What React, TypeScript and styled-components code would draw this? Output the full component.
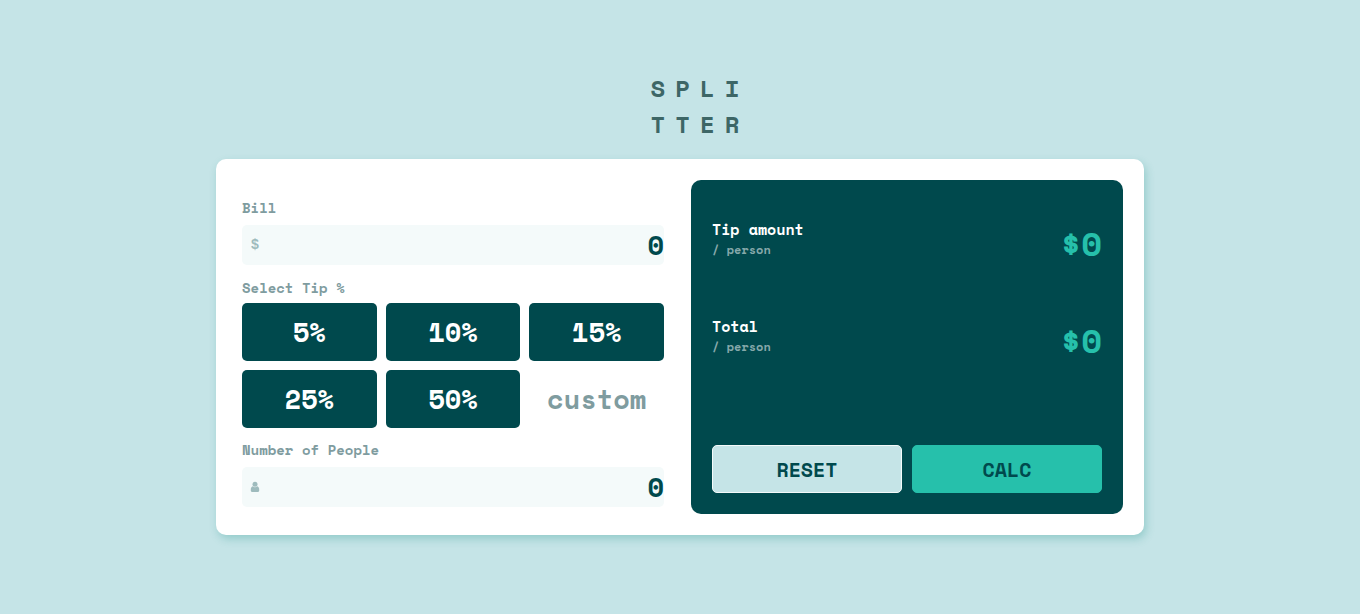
import React, { useState } from "react";
import styled, { createGlobalStyle } from "styled-components";

const GlobalStyle = createGlobalStyle`
  *, *::before, *::after { box-sizing: border-box; }
  body {
    margin: 0;
    background: #c5e4e7;
    color: #00494d;
    font-family: "Space Mono", "Liberation Mono", monospace;
    font-weight: 700;
  }
  button, input { font: inherit; color: inherit; }
`;

const Page = styled.main`
  min-height: 100vh;
  display: flex;
  flex-direction: column;
  align-items: center;
  justify-content: center;
  padding: 0 16px 9px;
`;

const Logo = styled.h1`
  margin: 0 0 17px;
  padding-left: 40px;
  font-size: 24px;
  line-height: 36px;
  letter-spacing: 10px;
  color: #3d6666;
`;

const Card = styled.section`
  width: 100%;
  max-width: 928px;
  display: grid;
  grid-template-columns: repeat(auto-fit, minmax(300px, 1fr));
  gap: 22px;
  padding: 21px;
  background: #fff;
  border-radius: 10px;
  box-shadow: 2px 4px 8px rgba(38, 150, 140, 0.3);
`;

const Form = styled.form`
  display: flex;
  flex-direction: column;
  gap: 12px;
  padding: 18px 5px 7px;
`;

const Field = styled.div`
  display: flex;
  flex-direction: column;
  gap: 7px;
`;

const Label = styled.label`
  font-size: 14px;
  line-height: 20px;
  color: #7f9c9f;
`;

const InputBox = styled.div`
  display: flex;
  align-items: center;
  height: 40px;
  padding-left: 8px;
  border-radius: 5px;
  background: #f4fafa;
`;

const FieldIcon = styled.span`
  display: flex;
  flex: none;
  width: 10px;
  justify-content: center;
  font-family: "Liberation Mono", monospace;
  font-size: 14px;
  font-weight: 700;
  color: #9ebbbd;
`;

const AmountInput = styled.input`
  flex: 1;
  min-width: 0;
  height: 40px;
  padding: 0;
  border: 0;
  outline: 0;
  background: transparent;
  font-size: 27px;
  text-align: right;
`;

const TipGroup = styled.fieldset`
  min-width: 0;
  margin: 0;
  padding: 0;
  border: 0;
`;

const TipLegend = styled.legend`
  padding: 0 0 4px;
  font-size: 14px;
  line-height: 22px;
  color: #7f9c9f;
`;

const TipGrid = styled.div`
  display: grid;
  grid-template-columns: repeat(3, minmax(0, 1fr));
  gap: 9px;
`;

const TipButton = styled.button`
  height: 58px;
  padding: 0;
  border: 0;
  border-radius: 5px;
  background: #00494d;
  color: #fff;
  font-size: 27px;
  cursor: pointer;
`;

const CustomTip = styled.input`
  width: 100%;
  height: 58px;
  padding: 0;
  border: 0;
  outline: 0;
  background: transparent;
  font-size: 27px;
  text-align: center;
  &::placeholder { color: #7f9c9f; opacity: 1; }
`;

const Summary = styled.section`
  display: flex;
  flex-direction: column;
  gap: 55px;
  padding: 39px 21px 21px;
  border-radius: 10px;
  background: #00494d;
`;

const ResultRow = styled.div`
  display: flex;
  align-items: flex-end;
  justify-content: space-between;
`;

const ResultName = styled.p`
  margin: 0;
  font-size: 15px;
  line-height: 20px;
  color: #fff;
`;

const PerPerson = styled.small`
  display: block;
  font-size: 12px;
  line-height: 22px;
  color: #86a8aa;
`;

const Result = styled.output`
  font-size: 34px;
  line-height: 36px;
  color: #26c0ab;
`;

const Actions = styled.div`
  display: grid;
  grid-template-columns: 1fr 1fr;
  gap: 10px;
  margin-top: auto;
`;

const ActionButton = styled.button<{ $primary?: boolean }>`
  height: 48px;
  padding: 0;
  border: 1px solid ${(p) => (p.$primary ? "#26c0ab" : "#f4fafa")};
  border-radius: 5px;
  background: ${(p) => (p.$primary ? "#26c0ab" : "#c5e4e7")};
  font-size: 20px;
  cursor: pointer;
`;

const PersonIcon = () => (
  <svg width="10" height="12" viewBox="0 0 10 12" fill="currentColor" aria-hidden="true">
    <circle cx="5" cy="3.3" r="2.5" />
    <path d="M2.8 5.3C4 6.6 6 6.6 7.2 5.3C8.6 5.8 9.2 7 9.2 8.4V9.6C9.2 10.5 8.8 11 8 11H2C1.2 11 0.8 10.5 0.8 9.6V8.4C0.8 7 1.4 5.8 2.8 5.3Z" />
  </svg>
);

const tips = [5, 10, 15, 25, 50];

const money = (n: number) => "$" + (n ? n.toFixed(2) : "0");

export default function App() {
  const [bill, setBill] = useState("0");
  const [people, setPeople] = useState("0");
  const [tip, setTip] = useState(0);
  const [custom, setCustom] = useState("");
  const [result, setResult] = useState({ tip: 0, total: 0 });

  const calc = () => {
    const amount = Number(bill) || 0;
    const count = Number(people) || 0;
    if (!count) return;
    const tipAmount = (amount * (Number(custom) || tip)) / 100;
    setResult({ tip: tipAmount / count, total: (amount + tipAmount) / count });
  };

  const reset = () => {
    setBill("0");
    setPeople("0");
    setTip(0);
    setCustom("");
    setResult({ tip: 0, total: 0 });
  };

  return (
    <>
      <GlobalStyle />
      <Page>
        <Logo>SPLI<br />TTER</Logo>
        <Card>
          <Form onSubmit={(e) => e.preventDefault()}>
            <Field>
              <Label htmlFor="bill">Bill</Label>
              <InputBox>
                <FieldIcon aria-hidden="true">$</FieldIcon>
                <AmountInput id="bill" inputMode="decimal" value={bill} onChange={(e) => setBill(e.target.value)} />
              </InputBox>
            </Field>
            <TipGroup>
              <TipLegend>Select Tip %</TipLegend>
              <TipGrid>
                {tips.map((t) => (
                  <TipButton key={t} type="button" aria-pressed={tip === t} onClick={() => setTip(t)}>
                    {t}%
                  </TipButton>
                ))}
                <CustomTip
                  aria-label="Custom tip"
                  inputMode="decimal"
                  placeholder="custom"
                  value={custom}
                  onChange={(e) => setCustom(e.target.value)}
                />
              </TipGrid>
            </TipGroup>
            <Field>
              <Label htmlFor="people">Number of People</Label>
              <InputBox>
                <FieldIcon><PersonIcon /></FieldIcon>
                <AmountInput id="people" inputMode="numeric" value={people} onChange={(e) => setPeople(e.target.value)} />
              </InputBox>
            </Field>
          </Form>
          <Summary>
            <ResultRow>
              <ResultName>Tip amount<PerPerson>/ person</PerPerson></ResultName>
              <Result>{money(result.tip)}</Result>
            </ResultRow>
            <ResultRow>
              <ResultName>Total<PerPerson>/ person</PerPerson></ResultName>
              <Result>{money(result.total)}</Result>
            </ResultRow>
            <Actions>
              <ActionButton type="button" onClick={reset}>RESET</ActionButton>
              <ActionButton type="button" $primary onClick={calc}>CALC</ActionButton>
            </Actions>
          </Summary>
        </Card>
      </Page>
    </>
  );
}
